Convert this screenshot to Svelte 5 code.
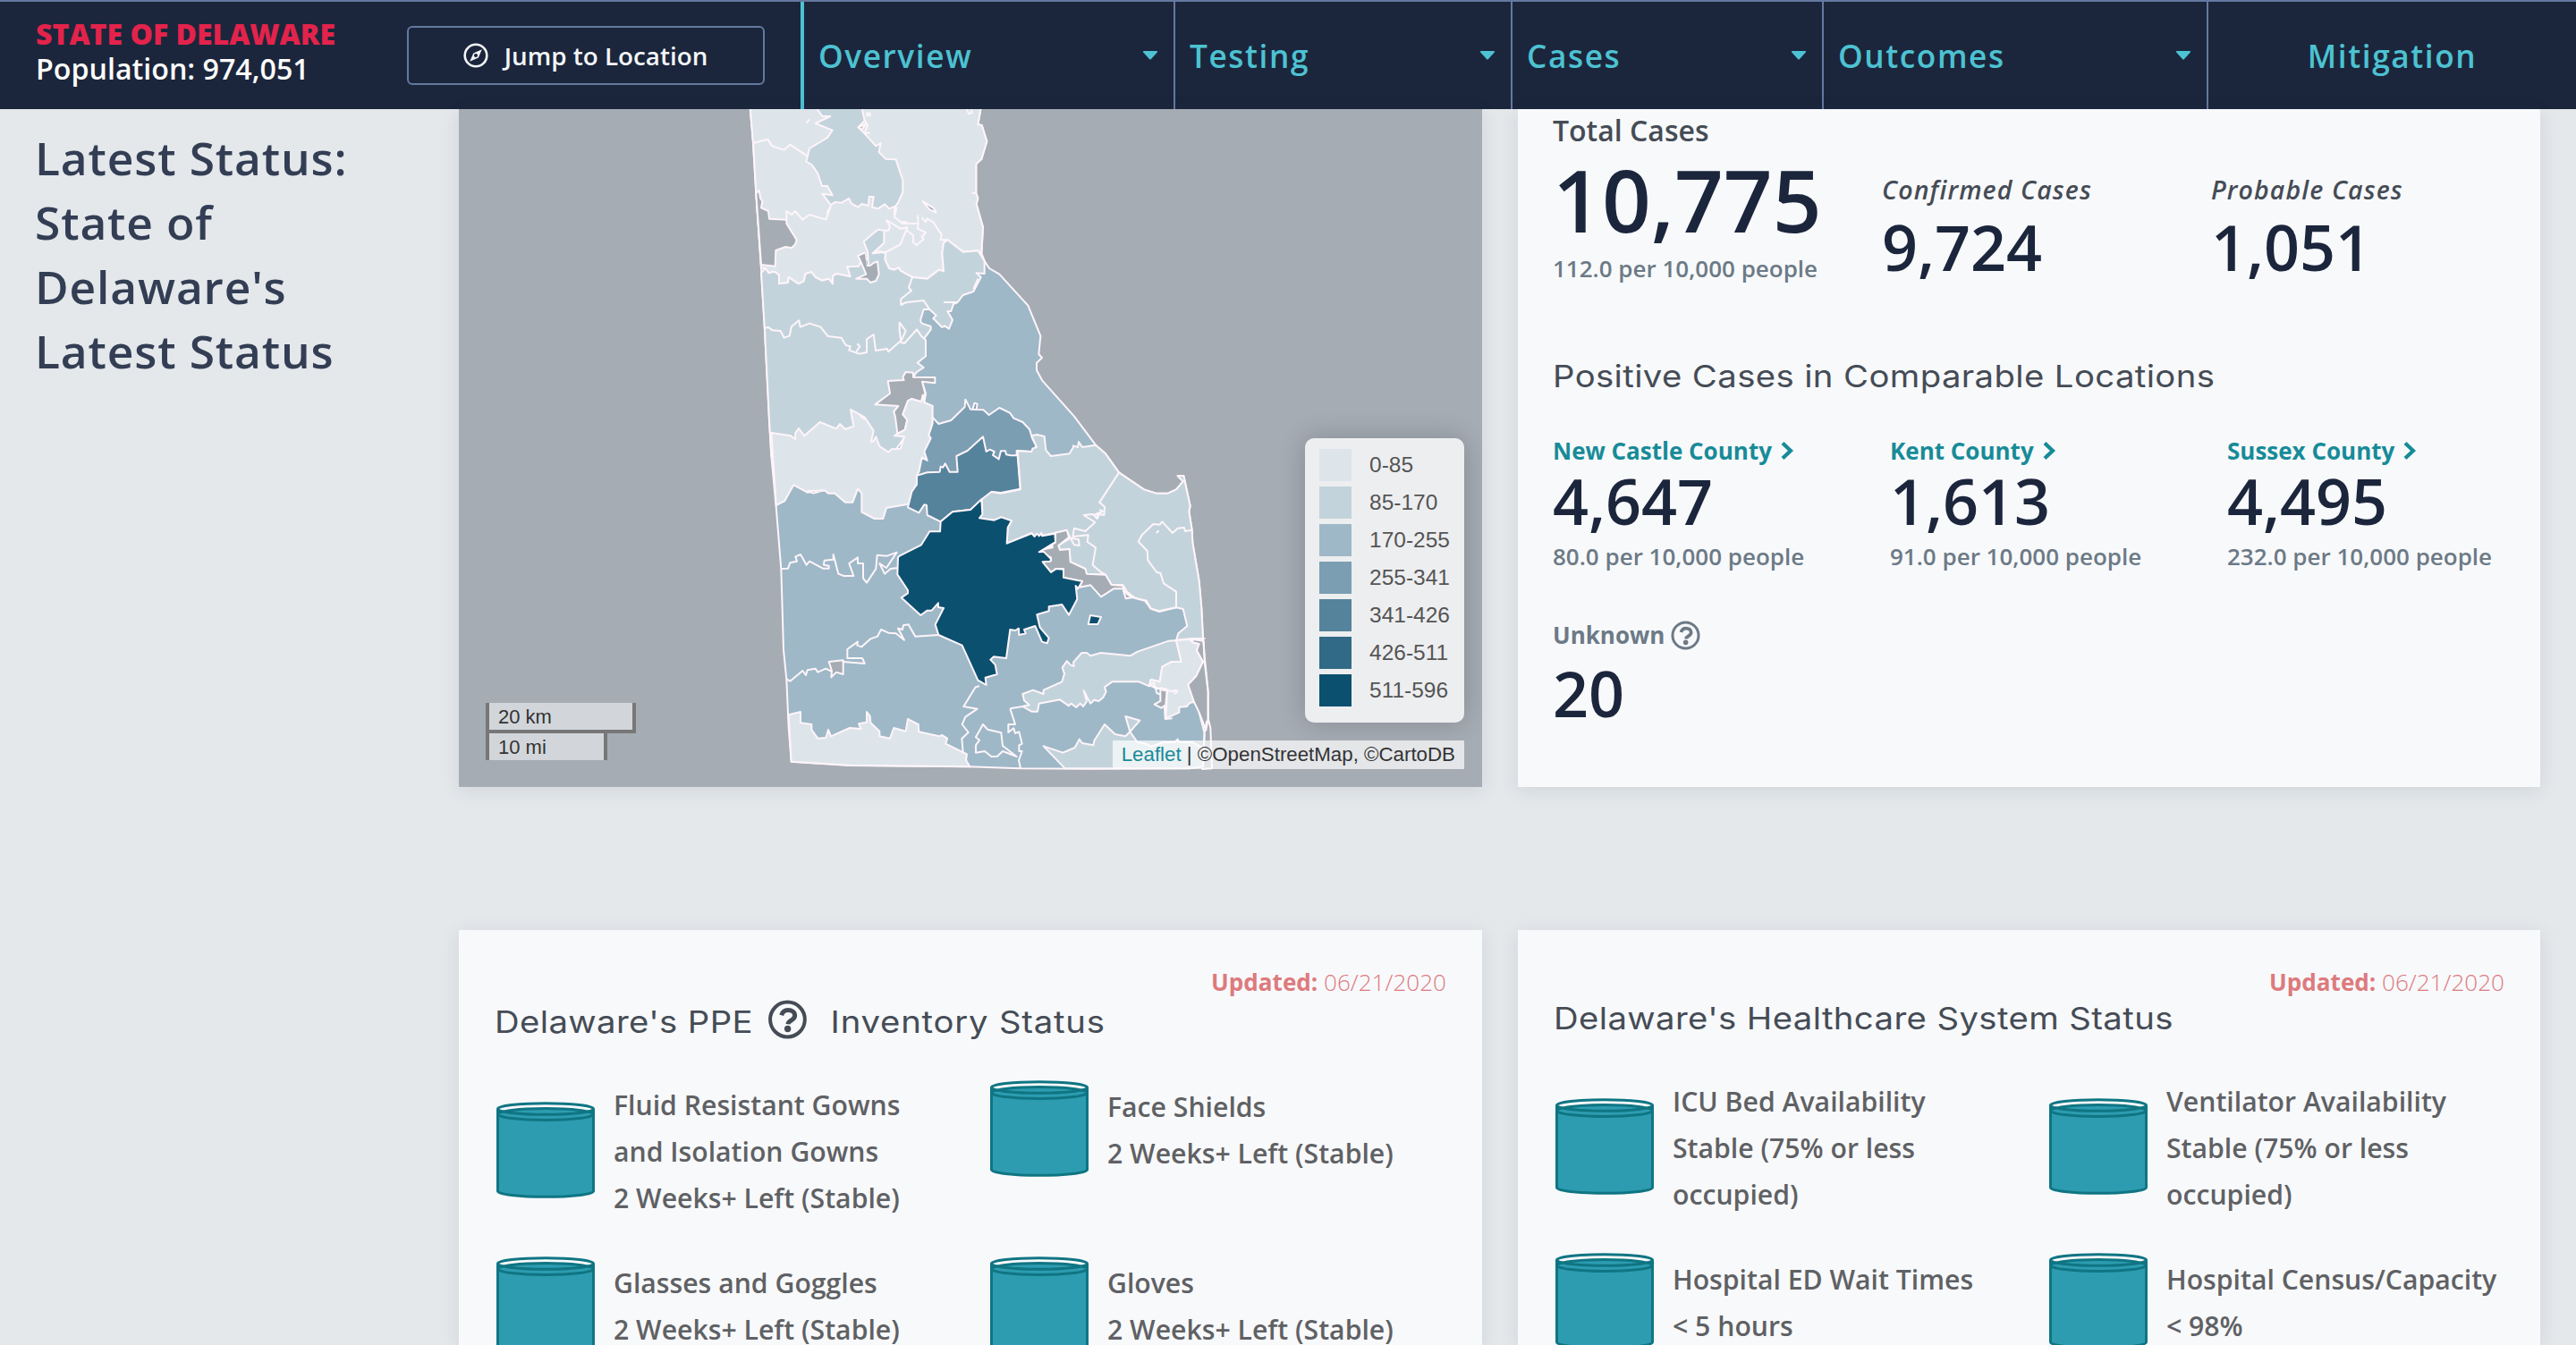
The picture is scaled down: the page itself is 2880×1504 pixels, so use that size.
<script>
  const nav = [
    { label: 'Overview', width: 415, menu: true },
    { label: 'Testing', width: 377, menu: true },
    { label: 'Cases', width: 348, menu: true },
    { label: 'Outcomes', width: 430, menu: true },
    { label: 'Mitigation', width: 411, menu: false }
  ];

  const counties = [
    { name: 'New Castle County', cases: '4,647', rate: '80.0' },
    { name: 'Kent County', cases: '1,613', rate: '91.0' },
    { name: 'Sussex County', cases: '4,495', rate: '232.0' }
  ];

  const legend = [
    { label: '0-85', color: '#dde5ea' },
    { label: '85-170', color: '#c3d3db' },
    { label: '170-255', color: '#9eb8c7' },
    { label: '255-341', color: '#7b9eb3' },
    { label: '341-426', color: '#55839c' },
    { label: '426-511', color: '#306a86' },
    { label: '511-596', color: '#0c5070' }
  ];

  const ppe = [
    ['Fluid Resistant Gowns', 'and Isolation Gowns', '2 Weeks+ Left (Stable)'],
    ['Face Shields', '2 Weeks+ Left (Stable)'],
    ['Glasses and Goggles', '2 Weeks+ Left (Stable)'],
    ['Gloves', '2 Weeks+ Left (Stable)']
  ];

  const health = [
    ['ICU Bed Availability', 'Stable (75% or less', 'occupied)'],
    ['Ventilator Availability', 'Stable (75% or less', 'occupied)'],
    ['Hospital ED Wait Times', '< 5 hours'],
    ['Hospital Census/Capacity', '< 98%']
  ];
</script>

{#snippet help(size)}
  <svg class="help" width={size} height={size} viewBox="0 0 44 44">
    <circle cx="22" cy="22" r="19.4" fill="none" stroke="currentColor" stroke-width="4" />
    <path d="M15.2 17.2C16.5 12.6 20 11.4 22.6 11.4c4.400 0 7.600 2.500 7.600 6.200 0 5.600-7.200 5.400-7.700 9.600" fill="none" stroke="currentColor" stroke-width="5" />
    <circle cx="22.200" cy="32.500" r="3.700" fill="currentColor" />
  </svg>
{/snippet}

{#snippet items(list)}
  <div class="items">
    {#each list as lines}
      <div class="item">
        <svg class="tank" width="112" height="108" viewBox="0 0 112 108">
          <path class="fluid" d="M3.500 14A53.500 6.400 0 0 1 110.500 14V100A53.500 6.400 0 0 1 3.500 100Z" />
          <path d="M3.500 8V100A53.500 6.300 0 0 0 110.500 100V8" />
          <ellipse cx="57" cy="8" rx="53.500" ry="6.300" />
          <ellipse cx="57" cy="14" rx="53.500" ry="6.400" />
        </svg>
        <div class="lines">
          {#each lines as line}<div>{line}</div>{/each}
        </div>
      </div>
    {/each}
  </div>
{/snippet}

<div class="page">
  <header>
    <div class="place">
      <div class="state">STATE OF DELAWARE</div>
      <div>Population: 974,051</div>
    </div>
    <button class="jump">
      <svg width="28" height="28" viewBox="0 0 28 28">
        <circle cx="14" cy="14" r="12.300" fill="none" stroke="currentColor" stroke-width="2.600" />
        <path d="M20.800 7.200 16.900 16.400 7.200 20.800 11.300 11.500Z" fill="currentColor" />
        <circle cx="14" cy="14" r="2.100" class="pivot" />
      </svg>
      <span>Jump to Location</span>
    </button>
    <nav>
      {#each nav as n}
        <div class="tab" class:plain={!n.menu} style:width="{n.width}px">
          <span>{n.label}</span>
          {#if n.menu}
            <svg width="18" height="10" viewBox="0 0 18 10"><path d="M2 0H16Q18 0 16.800 1.500L10 9Q9 10 8 9L1.200 1.500Q0 0 2 0Z" fill="currentColor" /></svg>
          {/if}
        </div>
      {/each}
    </nav>
  </header>

  <main>
    <aside>Latest Status: State of Delaware's Latest Status</aside>

    <section class="map">
      <svg class="geo" width="1144" height="758" viewBox="513 122 1144 758">
        <!-- state base: 170-255 -->
        <g transform="translate(820 110) scale(.33333)">
          <path class="c3" d="M55 20L66 150 76 320 93 570 105 780 120 1080 127 1200 143 1370 160 1580 168 1850 178 1950 185 2110 194 2225 390 2238 790 2242 960 2248 1200 2249 1530 2248 1575 2236 1580 2130 1562 2060 1525 1967 1552 1938 1575 1890 1554 1852 1562 1830 1575 1813 1570 1710 1562 1620 1540 1490 1538 1448 1528 1385 1532 1368 1510 1266 1490 1266 1508 1285 1485 1312 1457 1325 1418 1325 1377 1312 1293 1255 1248 1192 1215 1163 1143 1067 1036 947 1017 912 1017 887 1035 870 1024 858 1030 797 988 695 892 590 858 570 842 545 832 520 837 432 815 355 820 335 814 318 814 220 832 204 850 144 833 90 820 88 832 20Z" />
          <!-- northern 0-85 -->
          <path class="c1" d="M55 20L66 150 76 320 93 570 108 570 118 586 137 581 153 592 153 622 183 618 185 600 218 622 236 613 242 588 262 583 275 600 297 611 320 605 333 622 333 597 345 588 392 598 382 565 420 563 430 545 510 520 508 540 522 570 540 575 555 568 560 578 600 600 650 605 690 575 705 580 700 520 705 485 718 475 770 515 820 511 832 520 837 432 815 355 820 335 814 318 814 220 832 204 850 144 833 90 820 88 832 20Z" />
          <path class="c2" d="M270 20L298 60 325 60 275 84 332 107 315 132 255 168 244 212 262 222 282 250 297 294 315 294 332 325 298 320 327 358 340 348 362 350 388 336 395 352 418 365 430 354 453 360 455 330 470 330 465 365 485 370 508 355 522 370 543 362 552 350 568 315 568 275 545 205 510 203 488 180 494 150 478 160 440 118 418 97 440 75 428 20Z" />
          <!-- western 85-170 -->
          <path class="c2" d="M93 585L108 570 118 586 137 581 153 592 153 622 183 618 185 600 218 622 236 613 242 588 262 583 275 600 297 611 320 605 333 622 333 597 345 588 392 598 382 565 420 563 430 545 418 528 440 518 445 560 453 560 450 515 437 480 470 452 485 440 505 443 505 485 467 520 490 512 510 520 508 540 522 570 540 575 555 568 560 578 600 600 650 605 690 575 705 580 700 520 705 485 718 475 770 515 820 511 842 545 842 588 815 586 830 600 805 648 770 660 752 684 738 690 730 714 718 714 735 743 723 773 708 763 700 768 670 738 680 728 657 707 638 708 627 745 632 755 662 765 662 775 640 805 645 812 645 865 617 887 638 903 615 918 603 935 633 950 645 990 640 1020 575 1135 530 1200 127 1200 120 1080 105 780Z" />
          <path class="line" d="M105 770L118 768 130 778 158 780 170 803 188 797 195 765 220 745 224 767 255 755 292 767 317 798 362 803 377 828 392 832 388 845 422 857 447 852 447 808 470 792 477 846 515 840 520 850 557 817 573 822 615 775 632 800 640 805M600 600L588 635 597 645 562 673 562 693 580 684 638 678 657 707M752 684L705 684M557 752L578 780 562 815 557 780ZM415 823L424 832 412 850M820 605L805 640M66 150L115 137 130 160 170 173 190 155 247 193M327 358L310 407 255 390 232 407 207 378 195 390 178 378 178 407M543 362L540 398 568 420 620 420 618 392M632 400L645 415 650 403 670 415 698 457 695 475 718 475M513 408L560 437 583 433 560 490 513 515 467 520M578 440L603 460 603 482 615 492 638 472 632 465 645 450 618 437 620 420M513 408L525 430 520 443 505 443M540 398L560 415 583 415M448 50H458V58H448ZM255 70L245 84M782 36L790 52 800 48 798 36M800 318H814M440 75L450 90 440 118 458 115" />
          <path class="gray" d="M76 320L86 308 90 335 97 345 93 367 117 378 120 404 178 407 178 420 212 475 207 490 195 502 175 498 142 510 140 563 93 558Z" />
          <path class="gray" d="M447 562L460 560 470 552 483 547 488 590 478 612 460 618 447 605 412 605 445 590 430 555 418 528 440 518M635 345L670 367 680 383 658 373ZM420 97L445 86 430 105ZM540 362L547 367 542 390ZM315 380L325 368 315 385Z" />
          <path class="gray" d="M578 918L603 920 603 935 676 936 676 955 633 950 643 990 630 1018 597 1008 585 1015 568 1060 583 1078 575 1112 550 1125 543 1070 538 1050 553 1032 475 1027 525 990 518 948 572 945 568 935Z" />
          <path class="c1" d="M127 1122L192 1132 207 1143 208 1122 219 1107 238 1132 290 1086 345 1108 357 1092 375 1110 403 1100 393 1044 440 1070 470 1115 462 1152 470 1150 478 1135 490 1167 520 1187 530 1177 560 1175 573 1135 540 1132 550 1125 575 1112 583 1078 568 1060 585 1015 597 1008 630 1018 635 995 640 1020 668 1032 668 1090 655 1130 662 1140 642 1190 650 1215 632 1205 623 1250 630 1260 615 1265 615 1295 598 1320 593 1355 582 1362 513 1374 502 1410 473 1410 430 1388 430 1325 417 1310 400 1355 375 1355 340 1325 318 1325 305 1315 248 1322 202 1297 172 1350 143 1365Z" />
          <path class="gray" d="M425 1062L440 1075 430 1070ZM250 1317L300 1316 268 1325Z" />
          <path class="c4" d="M668 1070L688 1092 730 1080 776 1035 778 1010 795 1043 838 1045 857 1062 892 1038 927 1055 940 1073 970 1086 993 1110 1002 1140 1017 1168 998 1185 950 1182 950 1230 750 1270 615 1265 623 1250 632 1205 650 1215 640 1185 662 1140 655 1130 668 1090ZM803 1042L808 1022 818 1025 815 1042" />
        </g>
        <g transform="translate(820 480) scale(.33333)">
          <path class="c5" d="M615 155L650 145 692 143 695 125 703 128 710 115 725 143 752 143 748 90 785 72 837 25 848 75 860 68 875 75 870 87 890 100 897 73 912 73 915 85 930 88 953 88 962 200 897 213 867 210 795 270 735 277 695 310 650 288 648 255 640 253 622 280 585 262 598 210 615 185Z" />
          <!-- south-west 0-85 -->
          <path class="c1" d="M185 958L225 948 225 985 262 990 262 1008 283 1037 310 1035 318 1008 327 1030 390 1002 428 1005 420 988 447 983 447 948 458 962 460 985 490 1013 490 1030 525 1037 538 1002 578 1013 585 972 620 990 622 1015 690 1030 700 1026 717 1037 712 1055 783 1090 780 1110 793 1132 390 1127 194 1115Z" />
          <path class="line" d="M160 468L183 467 190 448 213 443 208 427 225 420 245 455 255 443 300 467 320 467 320 458 303 455 305 440 335 437 335 420 352 485 370 492 403 492 388 450 417 430 417 450 435 450 435 500 447 515 478 468 482 422 515 425 548 413 513 465 490 450 507 485 527 468 552 465M178 838L190 845 232 810 243 825 248 808 275 803 283 815 310 803 330 813M368 780L440 786 432 768 382 768 382 738 417 713 415 725 430 730 460 703 483 695 495 672 520 683 545 685 573 707 552 668 567 672 570 658 587 655 610 695 688 690M825 862L812 865 772 930 818 938 778 965 767 990 788 1017 766 1038 770 1083M928 937L970 930 1000 925M928 937L945 990 922 990 922 1017 940 1003 945 1020 958 1015 968 1055 958 1060 958 1080 968 1080 957 1110 963 1138M837 990L852 1007 898 1018 903 1062 950 1098 903 1080 885 1097 865 1098 843 1080 813 1085 813 1060 825 1043 813 1033Z" />
          <path class="gray" d="M320 780L368 775 368 822 345 815 328 832 330 810Z" />
        </g>
        <g transform="translate(1100 450) scale(.33333)">
          <path class="c2" d="M113 163L160 165 163 155 177 150 160 112 178 108 203 114 208 160 225 180 287 172 300 150 300 145 315 150 318 132 330 150 375 143 408 172 453 235 537 292 578 305 617 305 645 292 668 265 650 246 670 246 692 348 688 365 698 428 700 470 722 600 730 690 735 792 645 798 652 775 682 750 668 693 645 688 588 702 560 692 540 665 500 655 468 630 466 612 428 612 408 578 345 575 340 558 290 535 287 492 255 495 250 480 290 455 278 430 240 437 195 447 193 440 185 448 170 448 160 438 77 473 80 420 93 397 58 385 35 395 -15 390 -5 360 -7 325 25 300 57 305 123 292Z" />
          <path class="gray" d="M240 437L278 428 285 452 250 480 255 495 287 492 290 535 340 558 345 575 408 578 428 612 466 615 468 625 435 625 393 652 358 613 320 620 330 600 267 588 267 558 240 558 225 570 195 535 225 530 225 520 185 500 240 470Z" />
          <path class="gray" d="M468 632L496 655 476 658ZM190 495L230 480 230 487Z" />
          <path class="line" d="M453 235L388 335 405 350 403 378 388 375 380 390 365 375 335 378 373 402 340 432 303 422 298 450 350 445 347 468 375 487 365 545 393 570 408 578M290 455L318 460 320 480 303 478 290 455M370 378L385 370 378 388ZM388 360L398 365 388 372M698 428L675 432 672 420 650 422 633 438 598 400 590 410 568 408 530 445 518 467 548 498 550 530 580 570 592 572 603 607 645 635 645 688M578 438L587 430M468 615L480 635 505 655 545 665 560 692 588 700 645 688M645 798L690 793 742 792" />
        </g>
        <g transform="translate(820 480) scale(.33333)">
          <path class="c7" d="M695 310L735 277 795 270 832 235 835 285 825 298 875 305 898 295 933 307 920 330 917 383 1000 350 1010 360 1018 350 1025 358 1033 348 1035 358 1078 350 1080 378 1025 412 1040 410 1065 435 1063 443 1037 445 1065 480 1083 468 1107 470 1107 497 1170 510 1155 535 1148 525 1153 570 1125 623 1102 588 1058 595 1058 610 1018 622 1028 665 1058 700 1052 718 1035 713 1012 660 975 672 980 685 958 690 957 668 945 675 928 672 915 768 873 763 862 773 878 790 884 822 845 833 848 858 820 842 767 725 688 690 677 655 705 600 687 597 687 583 665 608 650 608 628 624 563 565 585 550 585 540 550 487 552 430 557 425 630 388 658 343 693 343Z" />
        </g>
        <g transform="translate(1100 450) scale(.33333)">
          <path class="c7" d="M357 714L393 720 382 744 350 744Z" />
          <path class="c2" d="M645 798L620 800 518 835 490 850 393 840 358 850 345 840 328 840 300 872 302 885 290 880 278 868 263 890 270 910 262 937 200 965 200 978 165 965 130 978 135 1000 152 1015 130 1020 160 1037 180 1037 185 1010 255 997 285 1018 292 1010 310 1023 323 1010 333 1020 345 1003 335 967 357 1010 370 998 385 1002 400 990 410 970 405 955 430 937 520 937 555 952 560 930 590 937 598 887 630 870 662 870Z" />
          <path class="c1" d="M645 798L690 795 700 805 722 810 714 832 735 870 712 918 685 947 705 1005 690 1008 680 1020 655 1022 655 1040 610 1060 615 965 590 960 580 960 555 948 560 930 590 937 598 887 630 870 662 870Z" />
          <path class="gray" d="M592 958L614 962 610 1015 595 1025 572 1013 592 1002Z" />
          <path class="gray" d="M737 800L740 870 752 970 752 1060 745 1100 722 1040 705 1005 685 947 712 918 735 870 714 832 722 810 700 805 700 795Z" />
          <path class="c2" d="M200 1153L265 1175 305 1158 320 1130 330 1143 367 1150 370 1135 405 1080 440 1113 475 1120 490 1105 515 1140 545 1145 560 1155 600 1140 640 1140 650 1130 655 1140 700 1140 735 1160 735 1222 690 1228 272 1228Z" />
          <path class="c2" d="M475 1053L523 1067 490 1105Z" />
          <path class="line" d="M735 790L742 870 752 970 752 1060 760 1092 765 1228 730 1230M748 1068L740 1105 735 1222M555 948L570 940 580 975 592 980M606 1020L608 1062 632 1060M635 965L650 968 640 978M575 955L600 965 640 970" />
        </g>
      </svg>

      <div class="legend">
        {#each legend as l}
          <div class="key"><i style:background={l.color}></i>{l.label}</div>
        {/each}
      </div>
      <div class="scale"><div class="km">20 km</div><div class="mi">10 mi</div></div>
      <div class="credit"><span class="leaflet">Leaflet</span> | ©OpenStreetMap, ©CartoDB</div>
    </section>

    <section class="card totals">
      <div class="total-label">Total Cases</div>
      <div class="sums">
        <div><div class="big">10,775</div><div class="rate">112.0 per 10,000 people</div></div>
        <div class="sub"><em>Confirmed Cases</em><div class="num">9,724</div></div>
        <div class="sub"><em>Probable Cases</em><div class="num">1,051</div></div>
      </div>
      <h2>Positive Cases in Comparable Locations</h2>
      <div class="counties">
        {#each counties as c}
          <div>
            <div class="county">{c.name}<svg width="16" height="22" viewBox="0 0 16 22"><path d="M3 2.500 12 11 3 19.500" fill="none" stroke="currentColor" stroke-width="4.200" /></svg></div>
            <div class="num">{c.cases}</div>
            <div class="rate">{c.rate} per 10,000 people</div>
          </div>
        {/each}
        <div class="unknown">
          <div class="county">Unknown{@render help(33)}</div>
          <div class="num">20</div>
        </div>
      </div>
    </section>

    <section class="card supplies">
      <div class="updated"><b>Updated:</b> 06/21/2020</div>
      <h2 class="low">Delaware's PPE {@render help(44)}<span>Inventory Status</span></h2>
      {@render items(ppe)}
    </section>

    <section class="card supplies">
      <div class="updated"><b>Updated:</b> 06/21/2020</div>
      <h2>Delaware's Healthcare System Status</h2>
      {@render items(health)}
    </section>
  </main>
</div>

<style>
  :global(body) { margin: 0; background: #e4e8eb; }
  .page {
    width: 2880px; height: 1504px; overflow: hidden;
    font-family: "Open Sans", sans-serif; background: #e4e8eb;
  }
  svg { display: block; flex: none; }
  header {
    box-sizing: border-box; height: 122px; display: flex; align-items: center;
    background: #1b263c; border-top: 2px solid #6478a0; color: #fdfdfb;
  }
  .place { width: 455px; padding-left: 40px; box-sizing: border-box; font: 600 32.200px/39px "Open Sans", sans-serif; white-space: nowrap; margin-top: -10px; }
  .state { font-size: 32px; font-weight: 800; color: #e3234b; }
  .jump {
    box-sizing: border-box; width: 400px; height: 66px; margin: 0 40px 0 0; padding: 0 1px 0 0;
    display: flex; align-items: center; justify-content: center; gap: 18px;
    border: 2px solid #6478a0; border-radius: 6px; background: none;
    color: #f3f5f8; font: 600 27.800px/36px "Open Sans", sans-serif;
  }
  .pivot { fill: #1b263c; }
  nav { display: flex; height: 120px; border-left: 4px solid #4dc2d2; color: #4dc2d2; }
  .tab {
    box-sizing: border-box; display: flex; align-items: center; justify-content: space-between;
    padding: 0 17px 0 16px; border-right: 2px solid #6478a0;
    font-size: 35.200px; font-weight: 600; letter-spacing: 1.600px;
  }
  .plain { justify-content: center; border-right: 0; padding: 0; }

  main {
    display: grid; grid-template-columns: 473px 1144px 1143px; column-gap: 40px;
    grid-template-rows: 758px 464px; row-gap: 160px;
  }
  aside {
    grid-row: 1 / 3; padding: 18px 60px 0 39px; color: #333e54;
    font-size: 51.500px; line-height: 72px; font-weight: 600; letter-spacing: .850px;
  }
  .card { background: #f8f9fb; box-shadow: 0 4px 20px rgba(40, 45, 65, .1); padding: 0 40px; }
  .map { position: relative; background: #a5acb4; box-shadow: 0 4px 20px rgba(40, 45, 65, .1); overflow: hidden; }
  .geo path { stroke: #fff5fa; stroke-width: 6; stroke-linejoin: round; }
  .geo .line { fill: none; }
  .geo .gray { fill: #a5acb4; }
  .geo .c1 { fill: #dde5ea; }
  .geo .c2 { fill: #c3d3db; }
  .geo .c3 { fill: #9eb8c7; }
  .geo .c4 { fill: #7b9eb3; }
  .geo .c5 { fill: #55839c; }
  .geo .c7 { fill: #0c5070; }
  .legend {
    position: absolute; right: 20px; bottom: 72px; width: 178px; height: 318px; box-sizing: border-box;
    padding: 12px 16px; background: rgba(255, 255, 255, .8); border-radius: 10px;
    box-shadow: 0 0 30px rgba(0, 0, 0, .2);
    font: 24.500px/36px "Liberation Sans", Arial, sans-serif; color: #555;
  }
  .key { display: flex; gap: 20px; margin-bottom: 6px; }
  .key i { width: 36px; height: 36px; }
  .scale {
    position: absolute; left: 30px; bottom: 30px;
    font: 22px/31px "Liberation Sans", Arial, sans-serif; color: #333;
  }
  .scale div { box-sizing: border-box; padding-left: 10px; background: rgba(255, 255, 255, .5); border: 4px solid #777; border-top: 0; }
  .km { width: 168px; height: 34px; }
  .mi { width: 136px; height: 30px; }
  .scale .mi { border-bottom: 0; }
  .credit {
    position: absolute; right: 20px; bottom: 20px; padding: 0 10px; white-space: nowrap;
    background: rgba(255, 255, 255, .7); font: 22.300px/32px "Liberation Sans", Arial, sans-serif; color: #333;
  }
  .leaflet { color: #178b98; }

  .totals { padding-left: 39px; }
  .total-label { padding-top: 2px; font-size: 32px; line-height: 44px; font-weight: 600; color: #454c56; }
  .sums { display: grid; grid-template-columns: 368px 368px 1fr; margin-top: 7px; height: 140px; }
  .big { font-size: 96px; line-height: 96px; font-weight: 600; color: #1b263c; }
  .rate { margin-top: 11px; font-size: 26px; line-height: 36px; font-weight: 600; color: #6c7a86; white-space: nowrap; }
  .sub { padding-top: 17px; }
  .sub em { display: block; font-size: 28.500px; line-height: 40px; font-weight: 600; letter-spacing: 1.100px; color: #454c56; white-space: nowrap; }
  .num { font-size: 70px; line-height: 72px; font-weight: 600; color: #1b263c; }
  .sub .num { margin-top: 8px; }
  h2 {
    margin: 0; height: 48px; display: flex; align-items: center; white-space: pre;
    font: 400 34.500px/48px Inter, "Open Sans", sans-serif; letter-spacing: .350px; color: #454c56;
    transform: scaleX(1.11); transform-origin: 0 50%;
  }
  .totals h2 { margin-top: 82px; }
  .counties { display: grid; grid-template-columns: 377px 377px 1fr; margin-top: 41px; }
  .county { display: flex; align-items: center; height: 36px; font-size: 26px; font-weight: 700; color: #178b98; white-space: nowrap; }
  .county svg { margin-left: 9px; }
  .county .help { margin-left: 7px; }
  .counties .num { margin-top: 2px; }
  .counties .rate { margin-top: 8px; }
  .unknown { margin-top: 52px; }
  .unknown .county { color: #6c7a86; }
  .unknown .num { margin-top: 11px; }

  .supplies { padding-top: 40px; }
  .updated { text-align: right; font-size: 26.100px; line-height: 36px; font-weight: 300; color: #dd7a7d; margin-bottom: -1px; }
  .updated b { font-weight: 700; }
  .low { margin-top: 4px; }
  .low .help { margin: -6px 0 0 3px; transform: scaleX(.9); }
  .low span { margin-left: 21px; letter-spacing: .700px; }
  .items { display: grid; grid-template-columns: 552px 1fr; align-items: start; row-gap: 41px; margin-top: 41px; }
  .item { display: flex; align-items: center; gap: 21px; }
  .lines { padding-top: 2px; margin-bottom: -2px; font-size: 30.200px; line-height: 52px; font-weight: 600; color: #5f6164; white-space: nowrap; }
  .tank path, .tank ellipse { fill: none; stroke: #0f7583; stroke-width: 3; }
  .tank .fluid { fill: #2d9cb0; stroke: none; }
</style>
